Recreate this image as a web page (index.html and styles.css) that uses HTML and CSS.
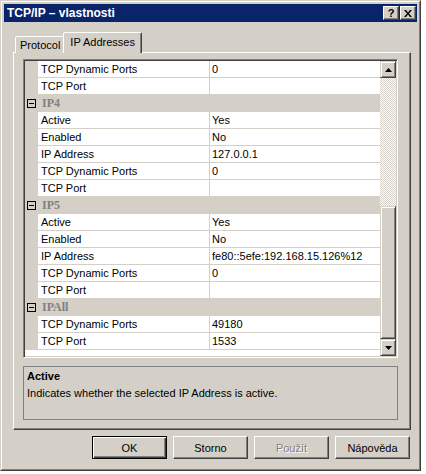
FILE: index.html
```html
<!DOCTYPE html>
<html>
<head>
<meta charset="utf-8">
<link rel="stylesheet" href="styles.css">
</head>
<body>
<div class="window">
  <div class="frame">
    <div class="titlebar">
      <span class="title">TCP/IP – vlastnosti</span>
      <div class="tbtns">
        <span class="tbtn q">?</span>
        <span class="tbtn x"><svg width="8" height="7" viewBox="0 0 8 7"><path d="M0 0h2l2 2.5L6 0h2L5 3.5 8 7H6L4 4.5 2 7H0l3-3.5z" fill="#000"/></svg></span>
      </div>
    </div>
    <div class="tabs">
      <div class="tab">Protocol</div>
      <div class="tab sel">IP Addresses</div>
    </div>
    <div class="panel">
      <div class="grid">
        <div class="rows">
          <div class="row"><div class="m"></div><div class="n">TCP Dynamic Ports</div><div class="v">0</div></div>
          <div class="row"><div class="m"></div><div class="n">TCP Port</div><div class="v"></div></div>
          <div class="row cat"><div class="m"><span class="box"></span></div><div class="n">IP4</div></div>
          <div class="row"><div class="m"></div><div class="n">Active</div><div class="v">Yes</div></div>
          <div class="row"><div class="m"></div><div class="n">Enabled</div><div class="v">No</div></div>
          <div class="row"><div class="m"></div><div class="n">IP Address</div><div class="v">127.0.0.1</div></div>
          <div class="row"><div class="m"></div><div class="n">TCP Dynamic Ports</div><div class="v">0</div></div>
          <div class="row"><div class="m"></div><div class="n">TCP Port</div><div class="v"></div></div>
          <div class="row cat"><div class="m"><span class="box"></span></div><div class="n">IP5</div></div>
          <div class="row"><div class="m"></div><div class="n">Active</div><div class="v">Yes</div></div>
          <div class="row"><div class="m"></div><div class="n">Enabled</div><div class="v">No</div></div>
          <div class="row"><div class="m"></div><div class="n">IP Address</div><div class="v">fe80::5efe:192.168.15.126%12</div></div>
          <div class="row"><div class="m"></div><div class="n">TCP Dynamic Ports</div><div class="v">0</div></div>
          <div class="row"><div class="m"></div><div class="n">TCP Port</div><div class="v"></div></div>
          <div class="row cat"><div class="m"><span class="box"></span></div><div class="n">IPAll</div></div>
          <div class="row"><div class="m"></div><div class="n">TCP Dynamic Ports</div><div class="v">49180</div></div>
          <div class="row"><div class="m"></div><div class="n">TCP Port</div><div class="v">1533</div></div>
        </div>
        <div class="sbar">
          <div class="sbtn"><svg width="7" height="4" viewBox="0 0 7 4"><path d="M3.5 0L7 4H0z" fill="#000"/></svg></div>
          <div class="track"></div>
          <div class="thumb"></div>
          <div class="sbtn"><svg width="7" height="4" viewBox="0 0 7 4"><path d="M0 0h7L3.5 4z" fill="#000"/></svg></div>
        </div>
      </div>
      <div class="desc">
        <div class="dtitle">Active</div>
        <div class="dtext">Indicates whether the selected IP Address is active.</div>
      </div>
    </div>
    <div class="buttons">
      <div class="btn def"><span>OK</span></div>
      <div class="btn"><span>Storno</span></div>
      <div class="btn dis"><span>Použít</span></div>
      <div class="btn"><span>Nápověda</span></div>
    </div>
  </div>
</div>
</body>
</html>
```

FILE: styles.css
```css
* { box-sizing: border-box; }
body {
  margin: 0;
  background: #ffffff;
  font-family: "Liberation Sans", Arial, sans-serif;
  font-size: 11px;
  font-weight: normal;
  color: #000;
}
.window {
  width: 421px;
  height: 471px;
  border: 1px solid;
  border-color: #d4d0c8 #404040 #404040 #d4d0c8;
}
.frame {
  height: 100%;
  background: #d4d0c8;
  border: 1px solid;
  border-color: #fff #808080 #808080 #fff;
  padding: 2px;
}
.titlebar {
  height: 18px;
  background: #0a246a;
  display: flex;
  align-items: center;
  justify-content: space-between;
  padding: 0 1px 0 3px;
}
.title {
  color: #fff;
  font-weight: bold;
  font-size: 12px;
}
.tbtns { display: flex; gap: 1px; }
.tbtn {
  width: 16px;
  height: 14px;
  background: #d4d0c8;
  border: 1px solid;
  border-color: #fff #404040 #404040 #fff;
  box-shadow: inset -1px -1px 0 #808080;
  display: flex;
  align-items: center;
  justify-content: center;
  font-weight: bold;
  font-size: 11px;
  line-height: 1;
}
.tabs {
  display: flex;
  align-items: flex-end;
  height: 31px;
  padding-left: 9px;
  margin-bottom: -1px;
  position: relative;
}
.tab {
  height: 17px;
  padding: 0 4px;
  margin-left: 2px;
  border: 1px solid;
  border-bottom: none;
  border-color: #fff #404040 transparent #fff;
  box-shadow: inset -1px 0 0 #808080;
  border-radius: 2px 2px 0 0;
  display: flex;
  align-items: center;
  background: #d4d0c8;
}
.tab.sel {
  height: 21px;
  margin-left: -2px;
  padding: 0 6px;
  padding-bottom: 3px;
  position: relative;
  z-index: 2;
}
.panel {
  width: 398px;
  height: 378px;
  margin-left: 9px;
  border: 1px solid;
  border-color: #fff #404040 #404040 #fff;
  box-shadow: inset -1px -1px 0 #808080;
  padding: 6px 11px 0 9px;
}
.grid {
  width: 375px;
  height: 299px;
  border: 1px solid;
  border-color: #808080 #fff #fff #808080;
  box-shadow: inset 1px 1px 0 #404040, inset -1px -1px 0 #d4d0c8;
  padding: 1px;
  display: flex;
  background: #fff;
}
.rows {
  width: 355px;
  display: flex;
  flex-direction: column;
}
.row {
  display: flex;
  height: 17px;
  flex: none;
}
.m {
  width: 13px;
  background: #d4d0c8;
  display: flex;
  align-items: center;
  padding-left: 2px;
}
.n {
  width: 172px;
  border-bottom: 1px solid #d4d0c8;
  border-right: 1px solid #d4d0c8;
  padding-left: 3px;
  line-height: 16px;
  white-space: nowrap;
}
.v {
  flex: 1;
  border-bottom: 1px solid #d4d0c8;
  padding-left: 2px;
  line-height: 16px;
  white-space: nowrap;
}
.cat { background: #d4d0c8; }
.cat .n {
  flex: 1;
  border: none;
  font-weight: bold;
  color: #808080;
  font-family: "Liberation Serif", "Times New Roman", serif;
  font-size: 12px;
  line-height: 17px;
  padding-left: 4px;
}
.box {
  width: 9px;
  height: 9px;
  border: 1px solid #000;
  position: relative;
}
.box::after {
  content: "";
  position: absolute;
  left: 1px;
  top: 3px;
  width: 5px;
  height: 1px;
  background: #000;
}
.sbar {
  width: 16px;
  display: flex;
  flex-direction: column;
}
.sbtn, .thumb {
  background: #d4d0c8;
  border: 1px solid;
  border-color: #d4d0c8 #404040 #404040 #d4d0c8;
  box-shadow: inset 1px 1px 0 #fff, inset -1px -1px 0 #808080;
}
.sbtn {
  height: 17px;
  flex: none;
  display: flex;
  align-items: center;
  justify-content: center;
}
.track {
  height: 128px;
  flex: none;
  background: repeating-conic-gradient(#fff 0 25%, #d4d0c8 0 50%) 0 0 / 2px 2px;
}
.thumb { flex: 1; }
.desc {
  margin-top: 8px;
  width: 375px;
  height: 54px;
  border: 1px solid #808080;
  padding: 2px 0 0 3px;
}
.dtitle {
  font-weight: bold;
  font-size: 11px;
  line-height: 15px;
}
.dtext {
  margin-top: 2px;
  line-height: 15px;
}
.buttons {
  display: flex;
  justify-content: flex-end;
  gap: 6px;
  padding-right: 7px;
  margin-top: 6px;
}
.btn {
  width: 75px;
  height: 23px;
  background: #d4d0c8;
  border: 1px solid;
  border-color: #fff #404040 #404040 #fff;
  box-shadow: inset -1px -1px 0 #808080;
  display: flex;
  align-items: center;
  justify-content: center;
  font-weight: normal;
}
.btn.def {
  border: 1px solid #000;
  box-shadow: inset 1px 1px 0 #fff, inset -1px -1px 0 #404040, inset -2px -2px 0 #808080;
}
.btn.dis span {
  color: #808080;
  text-shadow: 1px 1px 0 #fff;
}
```
